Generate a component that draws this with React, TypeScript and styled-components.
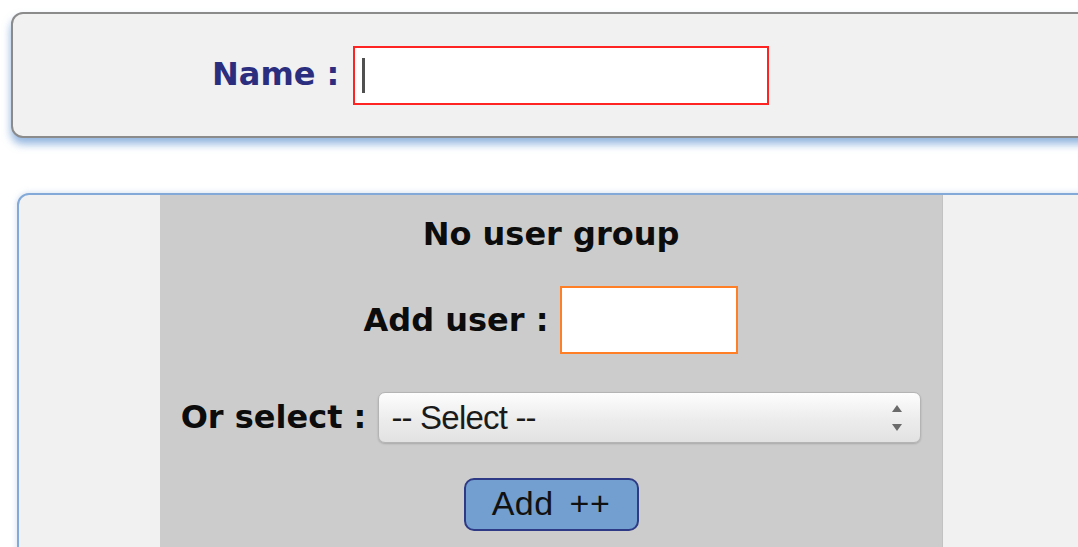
import { FC } from 'react'
import styled, { createGlobalStyle } from 'styled-components'

const GlobalStyle = createGlobalStyle`
  html, body {
    margin: 0;
    padding: 0;
    background: #ffffff;
    overflow: hidden;
  }
`

const Page = styled.div`
  width: 100vw;
  height: 100vh;
  overflow: hidden;
  padding: 12px 0 0 11px;
  box-sizing: border-box;
  font-family: 'DejaVu Sans', Verdana, sans-serif;
`

const NamePanel = styled.div`
  box-sizing: border-box;
  width: 1120px;
  height: 126px;
  display: flex;
  align-items: center;
  gap: 14px;
  padding-left: 199px;
  background: #f1f1f1;
  border: 2px solid #8b8b8b;
  border-radius: 12px;
  box-shadow: 0 6px 8px rgba(100, 150, 210, 0.7);
`

const Label = styled.label<{ $navy?: boolean }>`
  font-family: 'DejaVu Sans', Verdana, sans-serif;
  font-weight: bold;
  font-size: 32px;
  line-height: 1.164;
  color: ${({ $navy }) => ($navy ? '#2b2d7f' : '#0c0c0c')};
  white-space: nowrap;
`

const FieldWrap = styled.span`
  position: relative;
  display: inline-flex;
`

const TextField = styled.input<{ $width: number; $height: number; $accent: string }>`
  box-sizing: border-box;
  width: ${({ $width }) => $width}px;
  height: ${({ $height }) => $height}px;
  margin: 0;
  padding: 0 8px;
  border: 2px solid ${({ $accent }) => $accent};
  border-radius: 0;
  background: #ffffff;
  outline: none;
  font-family: 'Liberation Sans', Arial, sans-serif;
  font-size: 28px;
`

// text cursor sitting in the focused name field
const Caret = styled.span`
  position: absolute;
  left: 9px;
  top: 12px;
  width: 3px;
  height: 35px;
  background: #505050;
`

const GroupPanel = styled.div`
  box-sizing: border-box;
  width: 1120px;
  height: 420px;
  margin: 55px 0 0 6px;
  padding-left: 141px;
  background: #f1f1f1;
  border: 2px solid #82a9d8;
  border-radius: 12px;
  box-shadow: 0 0 6px rgba(114, 159, 207, 0.35);
`

const GroupColumn = styled.div`
  box-sizing: border-box;
  width: 782px;
  height: 100%;
  padding-top: 21px;
  display: flex;
  flex-direction: column;
  align-items: center;
  background: #cccccc;
  box-shadow: 1px 0 0 #c2c2c2;
`

const GroupTitle = styled.div`
  font-weight: bold;
  font-size: 32px;
  line-height: 1.164;
  color: #0c0c0c;
  margin-bottom: 33px;
`

const FormRow = styled.div<{ $gap: number; $after: number }>`
  display: flex;
  align-items: center;
  gap: ${({ $gap }) => $gap}px;
  margin-bottom: ${({ $after }) => $after}px;
`

const SelectWrap = styled.span`
  position: relative;
  display: inline-flex;
`

const Select = styled.select`
  box-sizing: border-box;
  appearance: none;
  -webkit-appearance: none;
  width: 543px;
  height: 51px;
  margin: 0;
  padding: 0 40px 0 12px;
  border: 1px solid #b4b4b4;
  border-radius: 7px;
  background: linear-gradient(180deg, #fdfdfd 0%, #ececec 55%, #e2e2e2 100%);
  box-shadow: 0 1px 2px rgba(0, 0, 0, 0.18);
  font-family: 'Liberation Sans', Arial, sans-serif;
  font-size: 33px;
  letter-spacing: -0.8px;
  color: #1a1a1a;
  outline: none;
`

const SelectArrows = styled.svg`
  position: absolute;
  right: 17px;
  top: 11px;
  pointer-events: none;
`

const AddButton = styled.button`
  box-sizing: border-box;
  width: 175px;
  height: 53px;
  margin: 0;
  padding: 0 0 2px;
  background: #729fcf;
  border: 2px solid #2f3a86;
  border-radius: 10px;
  font-family: 'Liberation Sans', Arial, sans-serif;
  font-size: 34px;
  word-spacing: 6px;
  letter-spacing: 0.5px;
  color: #111111;
  cursor: pointer;
`

const App: FC = () => (
  <Page>
    <GlobalStyle />
    <NamePanel>
      <Label $navy htmlFor="name">Name :</Label>
      <FieldWrap>
        <TextField id="name" $width={416} $height={59} $accent="#ff2424" />
        <Caret />
      </FieldWrap>
    </NamePanel>

    <GroupPanel>
      <GroupColumn>
        <GroupTitle>No user group</GroupTitle>
        <FormRow $gap={12} $after={38}>
          <Label htmlFor="add-user">Add user :</Label>
          <TextField id="add-user" $width={178} $height={68} $accent="#ff7f27" />
        </FormRow>
        <FormRow $gap={12} $after={35}>
          <Label htmlFor="user-select">Or select :</Label>
          <SelectWrap>
            <Select id="user-select" defaultValue="">
              <option value="">-- Select --</option>
            </Select>
            <SelectArrows width="14" height="30" viewBox="0 0 14 30">
              <path d="M7 2 L12 9 L2 9 Z" fill="#6a6a6a" />
              <path d="M2 21 L12 21 L7 28 Z" fill="#6a6a6a" />
            </SelectArrows>
          </SelectWrap>
        </FormRow>
        <AddButton type="button">Add ++</AddButton>
      </GroupColumn>
    </GroupPanel>
  </Page>
)

export default App
